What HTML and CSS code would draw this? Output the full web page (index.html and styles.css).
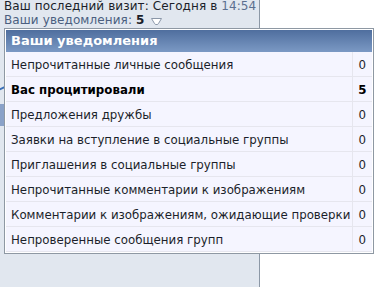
FILE: index.html
```html
<!DOCTYPE html>
<html>
<head>
<meta charset="utf-8">
<link rel="stylesheet" href="styles.css">
</head>
<body>
<div class="page">
  <div class="panel">
    <div class="visit">Ваш последний визит: Сегодня в <span class="time">14:54</span></div>
    <div class="notif">Ваши уведомления: <b class="num">5</b>
      <svg class="arrow" width="11" height="7" viewBox="0 0 11 7"><path d="M0.5 0.5 H10.5 L7.5 5.5 Q7 6.5 6 6.5 H5 Q4 6.5 3.5 5.5 Z" fill="#fff" stroke="#8a97a8" stroke-width="1"/></svg>
    </div>
    <div class="peek peek1"></div>
    <div class="peek peek2"></div>
  </div>
  <div class="popup">
    <div class="head">Ваши уведомления</div>
    <table class="list">
      <colgroup><col><col class="cntcol"></colgroup>
      <tr><td class="name">Непрочитанные личные сообщения</td><td class="cnt">0</td></tr>
      <tr class="hl"><td class="name">Вас процитировали</td><td class="cnt">5</td></tr>
      <tr><td class="name">Предложения дружбы</td><td class="cnt">0</td></tr>
      <tr><td class="name">Заявки на вступление в социальные группы</td><td class="cnt">0</td></tr>
      <tr><td class="name">Приглашения в социальные группы</td><td class="cnt">0</td></tr>
      <tr><td class="name">Непрочитанные комментарии к изображениям</td><td class="cnt">0</td></tr>
      <tr><td class="name">Комментарии к изображениям, ожидающие проверки</td><td class="cnt">0</td></tr>
      <tr><td class="name">Непроверенные сообщения групп</td><td class="cnt">0</td></tr>
    </table>
  </div>
</div>
</body>
</html>
```

FILE: styles.css
```css
html, body {
  margin: 0;
  padding: 0;
  background: #ffffff;
}
body {
  font-family: "DejaVu Sans", Verdana, sans-serif;
  font-size: 12px;
  color: #1b1f2a;
}
.page {
  position: relative;
  width: 382px;
  height: 287px;
  overflow: hidden;
}
.panel {
  position: relative;
  width: 260px;
  height: 287px;
  background: #e1e7ef;
  border-right: 1px solid #8c98a6;
  padding: 0 0 0 4px;
  box-sizing: border-box;
}
.visit {
  line-height: 13px;
  white-space: nowrap;
  color: #1b1f2a;
  letter-spacing: 0.1px;
}
.time {
  color: #5b6f90;
}
.notif {
  line-height: 14px;
  color: #4b5f80;
  white-space: nowrap;
  display: flex;
  align-items: center;
  letter-spacing: 0.1px;
}
.num {
  color: #1b1f2a;
  margin-left: 4px;
}
.arrow {
  margin-left: 6px;
  margin-top: 3px;
}
.peek {
  position: absolute;
  left: 0;
}
.peek1 {
  top: 87px;
  width: 6px;
  height: 3px;
  border-top: 2px solid #3a6fb8;
  transform: rotate(-25deg);
}
.peek2 {
  top: 104px;
  width: 4px;
  height: 22px;
  background: #8aa2c8;
}
.popup {
  position: absolute;
  left: 4px;
  top: 28px;
  width: 370px;
  border: 1px solid #8e98a3;
  background: #ffffff;
  box-sizing: border-box;
  padding: 1px;
}
.head {
  height: 22px;
  line-height: 22px;
  padding-left: 5px;
  color: #ffffff;
  font-weight: bold;
  font-size: 13px;
  background: linear-gradient(#4f6e9e, #7b99c4);
}
.list {
  width: 100%;
  border-collapse: collapse;
  table-layout: fixed;
  font-size: 11.8px;
}
.cntcol {
  width: 20px;
}
.list td {
  height: 22px;
  padding: 2px 0 0 0;
  background: #f5f5ff;
  border-bottom: 1px solid #e6e6ee;
  white-space: nowrap;
  overflow: hidden;
}
.name {
  padding-left: 5px !important;
}
.cnt {
  text-align: center;
  border-left: 1px solid #e6e6ee;
}
.hl td {
  font-weight: bold;
  color: #000000;
}
```
